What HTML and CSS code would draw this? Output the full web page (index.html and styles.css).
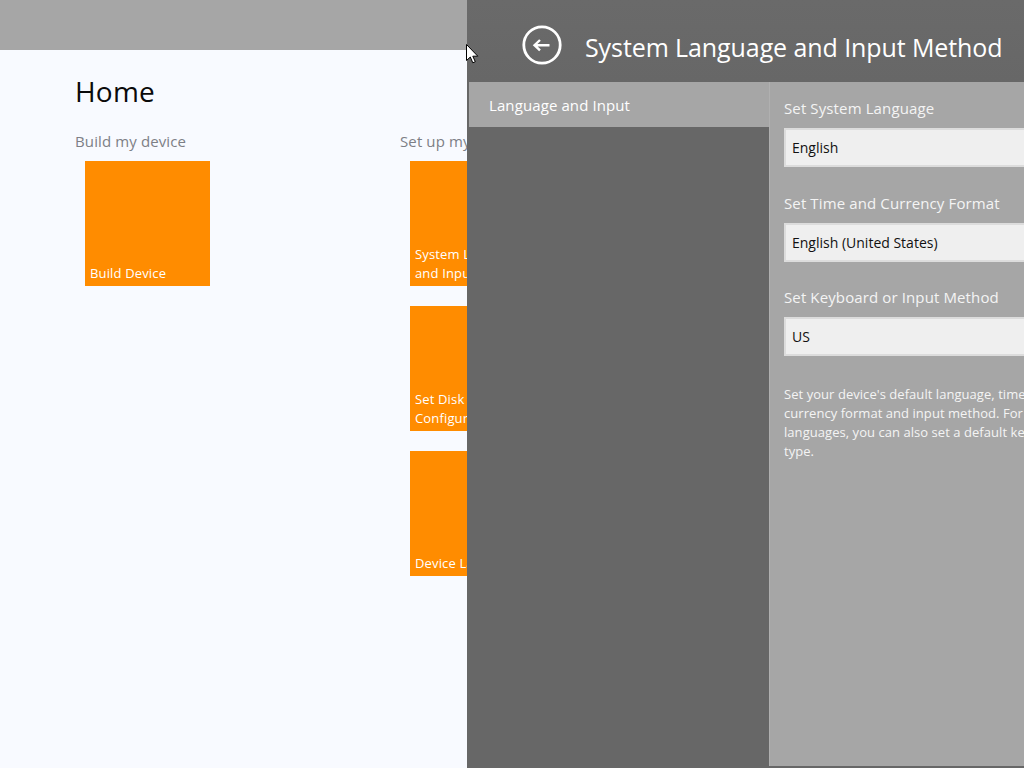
FILE: index.html
```html
<!DOCTYPE html>
<html lang="en">
<head>
<meta charset="utf-8">
<title>System Language and Input Method</title>
<link rel="stylesheet" href="styles.css">
</head>
<body>
<div class="home">
  <div class="topbar"></div>
  <main class="home-main">
    <h1 class="home-title">Home</h1>
    <div class="groups">
      <section class="group">
        <h2 class="group-title">Build my device</h2>
        <div class="tiles">
          <div class="tile">Build Device</div>
        </div>
      </section>
      <section class="group">
        <h2 class="group-title">Set up my device</h2>
        <div class="tiles">
          <div class="tile">System Language and Input Method</div>
          <div class="tile">Set Disk Configuration</div>
          <div class="tile">Device Layout</div>
        </div>
      </section>
    </div>
  </main>
</div>
<aside class="panel">
  <header class="panel-head">
    <svg class="back" width="40" height="40" viewBox="0 0 40 40" aria-hidden="true">
      <circle cx="20" cy="20" r="18.2" fill="none" stroke="#fff" stroke-width="2.8"/>
      <path d="M12.5 20.2H27.5M18 15L12.5 20.2L18 25.4" fill="none" stroke="#fff" stroke-width="2.4"/>
    </svg>
    <h1 class="panel-title">System Language and Input Method</h1>
  </header>
  <div class="panel-body">
    <nav class="side">
      <div class="side-item">Language and Input</div>
    </nav>
    <div class="content">
      <label class="field-label">Set System Language</label>
      <div class="select">English</div>
      <label class="field-label">Set Time and Currency Format</label>
      <div class="select">English (United States)</div>
      <label class="field-label">Set Keyboard or Input Method</label>
      <div class="select">US</div>
      <p class="help">Set your device's default language, time, currency format and input method. For some languages, you can also set a default keyboard type.</p>
    </div>
  </div>
</aside>
<svg class="cursor" width="13" height="20" viewBox="0 0 13 20" aria-hidden="true">
  <path d="M0.5 0.5V16.5L4.3 13L6.8 18.8L9.3 17.7L6.8 12.2H11.8Z" fill="#fff" stroke="#000" stroke-width="1"/>
</svg>
</body>
</html>
```
FILE: styles.css
```css
html, body {
  margin: 0;
  height: 100%;
  overflow: hidden;
}
body {
  position: relative;
  width: 1024px;
  height: 768px;
  font-family: "Open Sans", "Noto Sans", sans-serif;
  background: #f8faff;
}
.home { height: 100%; }
.topbar {
  height: 50px;
  background: #a6a6a6;
}
.home-main { padding: 22px 0 0 75px; }
.home-title {
  margin: 0;
  font-size: 28px;
  line-height: 38px;
  font-weight: 400;
  letter-spacing: 0.2px;
  color: #0a0a0a;
}
.groups {
  display: flex;
  margin-top: 21px;
}
.group { width: 325px; }
.group-title {
  margin: 0;
  font-size: 15px;
  line-height: 20px;
  font-weight: 400;
  letter-spacing: 0.12px;
  color: #7d7f86;
  white-space: nowrap;
}
.tiles {
  display: flex;
  flex-direction: column;
  gap: 20px;
  margin: 10px 0 0 10px;
}
.tile {
  box-sizing: border-box;
  display: flex;
  align-items: flex-end;
  width: 125px;
  height: 125px;
  padding: 0 5px 3px;
  background: #ff8c00;
  color: #fff;
  font-size: 13px;
  line-height: 19px;
  letter-spacing: 0.15px;
}
.panel {
  position: absolute;
  left: 467px;
  top: 0;
  width: 660px;
  height: 768px;
  background: #676767;
  color: #fff;
}
.panel-head {
  display: flex;
  align-items: center;
  gap: 23px;
  height: 82px;
  padding: 0 0 0 55px;
  background: linear-gradient(#6a6a6a, #676767);
  box-sizing: border-box;
}
.back { flex: none; margin-top: 8px; }
.panel-title {
  margin: 12px 0 0;
  font-size: 25px;
  line-height: 34px;
  font-weight: 400;
  letter-spacing: -0.09px;
  white-space: nowrap;
}
.panel-body {
  display: flex;
  height: 684px;
  padding-left: 2px;
}
.side {
  flex: none;
  width: 300px;
}
.side-item {
  height: 45px;
  padding-left: 20px;
  background: #a6a6a6;
  font-size: 15px;
  line-height: 47px;
  letter-spacing: 0.1px;
}
.content {
  flex: 1;
  height: 684px;
  box-sizing: border-box;
  border-left: 1px solid #b0b0b0;
  padding: 14px 0 0 14px;
  background: #a6a6a6;
  margin-bottom: 2px;
}
.field-label {
  display: block;
  font-size: 15px;
  line-height: 24px;
  letter-spacing: 0.12px;
  color: #f4f4f4;
}
.select {
  box-sizing: border-box;
  height: 39px;
  margin: 8px 0 23.5px;
  padding-left: 6px;
  border: 2px solid #dcdcdc;
  background: #efefef;
  color: #111;
  font-size: 14px;
  line-height: 35px;
}
.help {
  width: 290px;
  margin: 29px 0 0;
  font-size: 13px;
  line-height: 19px;
  letter-spacing: 0.05px;
  color: #f4f4f4;
}
.cursor {
  position: absolute;
  left: 466px;
  top: 44px;
}
```
